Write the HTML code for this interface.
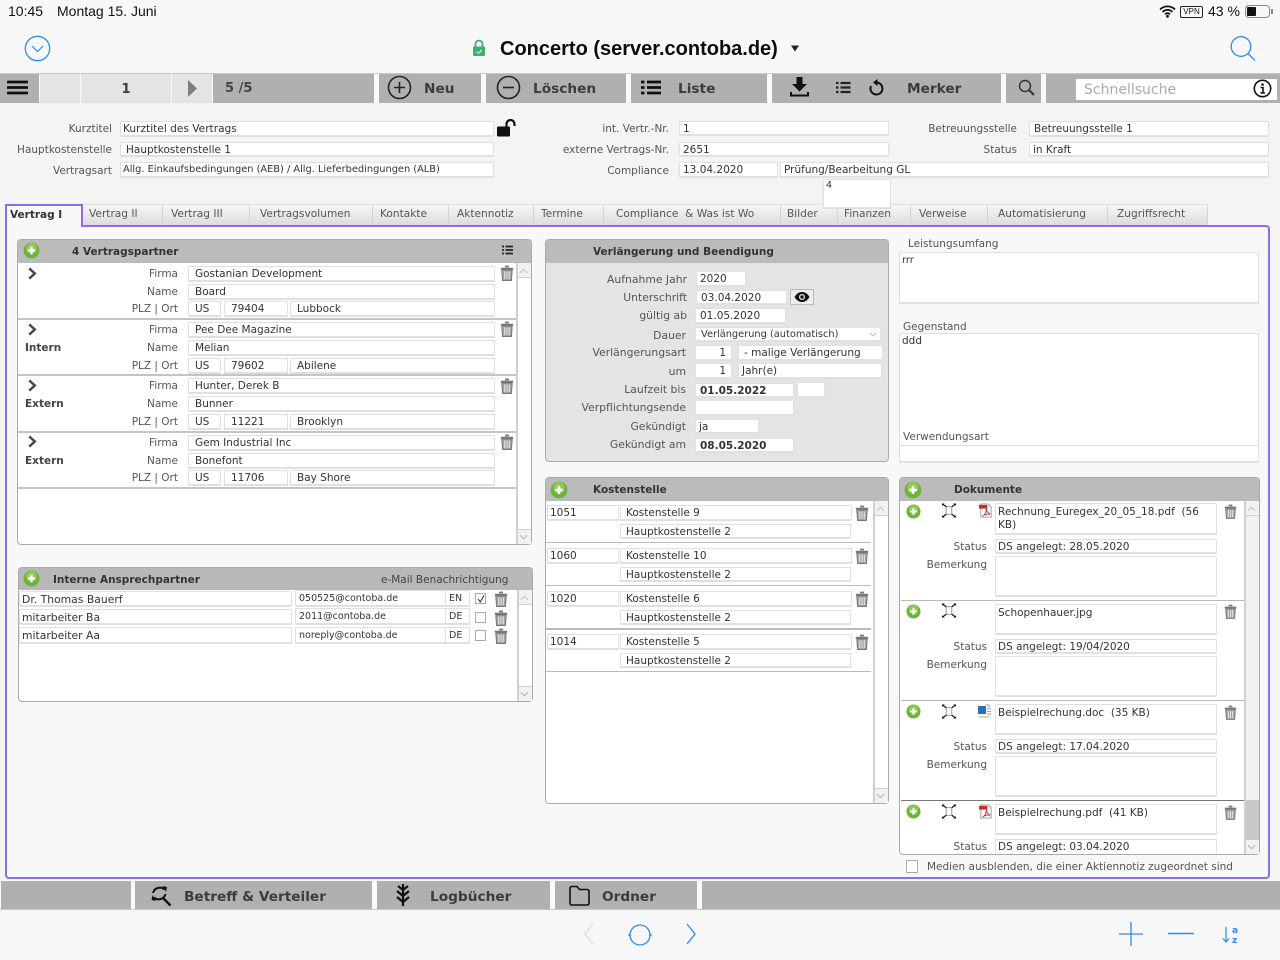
<!DOCTYPE html>
<html lang="de"><head><meta charset="utf-8"><title>Concerto</title>
<style>
html,body{margin:0;padding:0;width:1280px;height:960px;overflow:hidden;background:#f4f4f4}
*{box-sizing:border-box}
body{position:relative;font:11px/1 "DejaVu Sans",sans-serif;color:#333}
div,span.a,svg.a{position:absolute}
.f{background:#fff;border:1px solid #e0e0e0;border-bottom:2px solid #e0e0e0;padding-left:3px;white-space:nowrap;overflow:hidden;color:#333;font-size:10.5px;line-height:15px;border-radius:1px}
.l{text-align:right;color:#555;white-space:nowrap;font-size:10.5px;line-height:16px}
.t{white-space:nowrap;line-height:14px;font-size:10.5px;color:#555}
.b{font-weight:bold;color:#333}
.tb{background:#b0b0b0;top:74px;height:29px}
.tbt{font:bold 13.7px/18px "DejaVu Sans",sans-serif;color:#3c3c3c;white-space:nowrap;top:80px}
.tab{top:204px;height:21px;background:linear-gradient(#f6f6f6,#dcdcdc);border-right:1px solid #d4d4d4;border-top:1px solid #e0e0e0;font-size:10.6px;line-height:19px;color:#555;padding-left:6px;white-space:nowrap}
.p{background:#fff;border:1px solid #aaa;border-radius:4px}
.h{background:#bbb;border-radius:4px 4px 0 0}
.ln{height:2px;background:#c4c4c4}
.sb{background:#fff;border-left:2px solid #d0d0d0}
.sa{background:#f1f1f1;border-bottom:1px solid #d0d0d0}
.bb{background:#b0b0b0;top:881px;height:28px}
.bbt{font:bold 13.7px/18px "DejaVu Sans",sans-serif;color:#3c3c3c;white-space:nowrap;top:888px}
</style></head><body>
<svg width="0" height="0" style="position:absolute"><defs>
<symbol id="tr" viewBox="0 0 14 16"><path d="M5 1.500h4M.8 3.700h12.400" stroke="#777" stroke-width="1.800" fill="none"/><path d="M1.800 5h10.400l-.8 10.500H2.600z" fill="#a4a4a4" stroke="#777"/><path d="M4.700 6.500v7.500M7 6.500v7.500M9.300 6.500v7.500" stroke="#e8e8e8" stroke-width="1"/></symbol>
<symbol id="pl" viewBox="0 0 16 16"><circle cx="8" cy="8" r="7.500" fill="#6db33a"/><circle cx="8" cy="6" r="5" fill="#8fcb55"/><path d="M8 4.500v7M4.500 8h7" stroke="#fff" stroke-width="2.200"/></symbol>
<symbol id="ex" viewBox="0 0 16 16"><path d="M5 4h6v8H5z" fill="none" stroke="#777" stroke-width=".8"/><path d="M1 1l4 3M15 1l-4 3M1 15l4-3M15 15l-4-3" stroke="#111" stroke-width="1.300"/><path d="M.5.500h3l-3 2.500zM15.500.500h-3l3 2.500zM.5 15.500h3l-3-2.500zM15.500 15.500h-3l3-2.500z" fill="#111"/></symbol>
<symbol id="pdf" viewBox="0 0 16 16"><path d="M3 1h8l3 3v11H3z" fill="#fff" stroke="#999"/><path d="M1 2h9v4H1z" fill="#c92c2c"/><path d="M5 14c3-2 4-5 4-8 0 3 2 5 4 6-3-.5-6 0-8 2z" fill="none" stroke="#c92c2c"/></symbol>
<symbol id="ch" viewBox="0 0 10 14"><path d="M2 1.500l6 5.500-6 5.500" fill="none" stroke="#444" stroke-width="2.600"/></symbol>
<symbol id="up" viewBox="0 0 10 6"><path d="M1 5l4-4 4 4" fill="none" stroke="#bbb"/></symbol>
<symbol id="dn" viewBox="0 0 10 6"><path d="M1 1l4 4 4-4" fill="none" stroke="#aaa"/></symbol>
</defs></svg>

<!-- top -->
<div style="left:0;top:0;width:1280px;height:73px;background:#f8f8f8"></div>
<div style="left:8px;top:3px;font:14px/17px 'Liberation Sans',sans-serif;color:#111;white-space:nowrap">10:45</div>
<div style="left:57px;top:3px;font:14px/17px 'Liberation Sans',sans-serif;color:#111;white-space:nowrap">Montag 15. Juni</div>
<svg class="a" style="left:1159px;top:5px" width="17" height="13" viewBox="0 0 17 13"><path d="M1 4.500a10.500 10.500 0 0 1 15 0M3.500 7a7 7 0 0 1 10 0M6 9.300a3.400 3.400 0 0 1 5 0" fill="none" stroke="#111" stroke-width="1.800"/><circle cx="8.500" cy="11.300" r="1.400" fill="#111"/></svg>
<div style="left:1180px;top:6px;width:23px;height:12px;border:1px solid #222;border-radius:2px;font:8px/10px 'Liberation Sans',sans-serif;text-align:center;color:#111">VPN</div>
<div style="left:1208px;top:3px;font:14px/17px 'Liberation Sans',sans-serif;color:#111;white-space:nowrap">43 %</div>
<div style="left:1245px;top:5px;width:25px;height:13px;border:1px solid #888;border-radius:4px"></div>
<div style="left:1247px;top:7px;width:9px;height:9px;background:#111;border-radius:1px"></div>
<div style="left:1271px;top:9px;width:1.500px;height:5px;background:#888"></div>
<svg class="a" style="left:24px;top:35px" width="27" height="27" viewBox="0 0 27 27"><circle cx="13.500" cy="13.500" r="12.200" fill="none" stroke="#2f8bf0" stroke-width="1.300"/><path d="M8 11l5.500 5.500L19 11" fill="none" stroke="#2f8bf0" stroke-width="1.200"/></svg>
<svg class="a" style="left:472px;top:39px" width="14" height="18" viewBox="0 0 14 18"><path d="M3.500 8V5a3.500 3.500 0 0 1 7 0v3" fill="none" stroke="#3fae75" stroke-width="1.800"/><rect x="1" y="7.500" width="12" height="9.500" rx="1" fill="#3fae75"/><path d="M4.500 12.500l2 2 3-3.500" fill="none" stroke="#e8fff0" stroke-width="1"/></svg>
<div style="left:500px;top:37px;font:bold 20px/24px 'Liberation Sans',sans-serif;color:#0c0c0c;white-space:nowrap">Concerto (server.contoba.de)</div>
<svg class="a" style="left:790px;top:45px" width="10" height="7" viewBox="0 0 10 7"><path d="M1 .5h8L5 6.500z" fill="#222"/></svg>
<svg class="a" style="left:1229px;top:35px" width="28" height="27" viewBox="0 0 28 27"><circle cx="12" cy="11.500" r="9.800" fill="none" stroke="#2f8bf0" stroke-width="1.300"/><path d="M19 18.500l7 7" stroke="#2f8bf0" stroke-width="1.300"/></svg>

<!-- toolbar -->
<div style="left:0;top:73px;width:1280px;height:30px;background:#fafafa;border-top:1px solid #c8c8c8"></div>
<div class="tb" style="left:0;width:39px"></div>
<svg class="a" style="left:7px;top:80px" width="21" height="15" viewBox="0 0 21 15"><path d="M1 2h19M1 7.500h19M1 13h19" stroke="#111" stroke-width="2.800" stroke-linecap="round"/></svg>
<div style="left:40px;top:74px;width:40px;height:29px;background:#e4e4e4"></div>
<div style="left:81px;top:74px;width:90px;height:29px;background:#e4e4e4;font:bold 13px/31px 'DejaVu Sans',sans-serif;text-align:center;color:#3c3c3c">1</div>
<div style="left:172px;top:74px;width:40px;height:29px;background:#e4e4e4"></div>
<svg class="a" style="left:187px;top:80px" width="11" height="17" viewBox="0 0 11 17"><path d="M1 0l9 8.500-9 8.500z" fill="#7e7e7e"/></svg>
<div class="tb" style="left:213px;width:161px"></div>
<div class="tbt" style="left:225px;font-size:13px;color:#444">5 /5</div>
<div class="tb" style="left:379px;width:102px"></div>
<svg class="a" style="left:387px;top:75px" width="25" height="25" viewBox="0 0 25 25"><circle cx="12.500" cy="12.500" r="11" fill="none" stroke="#222" stroke-width="1.600"/><path d="M12.500 7v11M7 12.500h11" stroke="#222" stroke-width="1.600"/></svg>
<div class="tbt" style="left:424px">Neu</div>
<div class="tb" style="left:486px;width:140px"></div>
<svg class="a" style="left:496px;top:75px" width="25" height="25" viewBox="0 0 25 25"><circle cx="12.500" cy="12.500" r="11" fill="none" stroke="#222" stroke-width="1.600"/><path d="M7 12.500h11" stroke="#222" stroke-width="1.600"/></svg>
<div class="tbt" style="left:533px">Löschen</div>
<div class="tb" style="left:631px;width:136px"></div>
<svg class="a" style="left:641px;top:80px" width="20" height="15" viewBox="0 0 20 15"><path d="M0 2h3.500M0 7.500h3.500M0 13h3.500M6 2h14M6 7.500h14M6 13h14" stroke="#111" stroke-width="2.800"/></svg>
<div class="tbt" style="left:678px">Liste</div>
<div class="tb" style="left:772px;width:229px"></div>
<svg class="a" style="left:790px;top:77px" width="19" height="20" viewBox="0 0 19 20"><path d="M6.500 0h6v7h4.500l-7.500 7.500L2 7h4.500z" fill="#111"/><path d="M1 15v3.500h17V15" fill="none" stroke="#111" stroke-width="2"/></svg>
<svg class="a" style="left:836px;top:81px" width="15" height="13" viewBox="0 0 15 13"><path d="M0 2h2.500M0 6.500h2.500M0 11h2.500M4.500 2h10M4.500 6.500h10M4.500 11h10" stroke="#222" stroke-width="2.200"/></svg>
<svg class="a" style="left:868px;top:79px" width="17" height="17" viewBox="0 0 17 17"><path d="M8.500 3.500a6 6 0 1 1-5.500 3.500" fill="none" stroke="#111" stroke-width="2"/><path d="M9.500 0v7L5 3.500z" fill="#111"/></svg>
<div class="tbt" style="left:907px">Merker</div>
<div class="tb" style="left:1006px;width:35px"></div>
<svg class="a" style="left:1018px;top:79px" width="17" height="17" viewBox="0 0 17 17"><circle cx="7" cy="7" r="5.500" fill="none" stroke="#333" stroke-width="1.500"/><path d="M11 11l5 5" stroke="#333" stroke-width="2"/></svg>
<div class="tb" style="left:1046px;width:234px"></div>
<div style="left:1076px;top:79px;width:201px;height:21px;background:#fff;font:14px/23px 'DejaVu Sans',sans-serif;color:#aaa;padding-left:8px">Schnellsuche</div>
<svg class="a" style="left:1253px;top:79px" width="19" height="19" viewBox="0 0 19 19"><circle cx="9.500" cy="9.500" r="8.200" fill="none" stroke="#111" stroke-width="1.600"/><circle cx="9.500" cy="5.500" r="1.300" fill="#111"/><path d="M7.500 8.500h2.500v5M7.500 14h4.500" fill="none" stroke="#111" stroke-width="1.600"/></svg>

<!-- head form -->
<div class="l" style="left:0;top:121px;width:112px">Kurztitel</div>
<div class="f" style="left:120px;top:121px;width:374px;height:16px;padding-left:2px;font-size:10.600px">Kurztitel des Vertrags</div>
<svg class="a" style="left:496px;top:119px" width="21" height="18" viewBox="0 0 21 18"><rect x="1" y="7.500" width="13" height="10" rx="1" fill="#111"/><path d="M10.500 8V5a4 4 0 0 1 8 0v2" fill="none" stroke="#111" stroke-width="2.200"/></svg>
<div class="l" style="left:0;top:142px;width:112px">Hauptkostenstelle</div>
<div class="f" style="left:120px;top:142px;width:374px;height:15px;padding-left:5px">Hauptkostenstelle 1</div>
<div class="l" style="left:0;top:163px;width:112px">Vertragsart</div>
<div class="f" style="left:120px;top:162px;width:374px;height:16px;font-size:9.800px;line-height:14px;padding-left:2px">Allg. Einkaufsbedingungen (AEB) / Allg. Lieferbedingungen (ALB)</div>
<div class="l" style="left:500px;top:121px;width:169px">int. Vertr.-Nr.</div>
<div class="f" style="left:679px;top:121px;width:210px;height:15px">1</div>
<div class="l" style="left:500px;top:142px;width:169px">externe Vertrags-Nr.</div>
<div class="f" style="left:679px;top:142px;width:210px;height:15px">2651</div>
<div class="l" style="left:500px;top:163px;width:169px">Compliance</div>
<div class="f" style="left:679px;top:162px;width:99px;height:16px">13.04.2020</div>
<div class="f" style="left:780px;top:162px;width:489px;height:16px">Prüfung/Bearbeitung GL</div>
<div class="l" style="left:880px;top:121px;width:137px">Betreuungsstelle</div>
<div class="f" style="left:1029px;top:121px;width:240px;height:16px;padding-left:4px">Betreuungsstelle 1</div>
<div class="l" style="left:880px;top:142px;width:137px">Status</div>
<div class="f" style="left:1029px;top:142px;width:240px;height:15px">in Kraft</div>

<!-- main frame -->
<div style="left:5px;top:225px;width:1265px;height:654px;background:#f8f8f8;border:2px solid #8b6fe2;border-radius:0 4px 4px 4px"></div>

<!-- tabs -->
<div style="left:5px;top:204px;width:78px;height:23px;background:#f8f8f8;border:2px solid #8b6fe2;border-bottom:none;font:bold 10.500px/18px 'DejaVu Sans',sans-serif;color:#333;padding-left:3px">Vertrag I</div>
<div class="tab" style="left:83px;width:80px">Vertrag II</div>
<div class="tab" style="left:163px;width:87px;padding-left:8px">Vertrag III</div>
<div class="tab" style="left:250px;width:123px;padding-left:10px">Vertragsvolumen</div>
<div class="tab" style="left:373px;width:76px;padding-left:7px">Kontakte</div>
<div class="tab" style="left:449px;width:85px;padding-left:8px">Aktennotiz</div>
<div class="tab" style="left:534px;width:70px;padding-left:7px">Termine</div>
<div class="tab" style="left:604px;width:177px;padding-left:12px">Compliance&nbsp; &amp; Was ist Wo</div>
<div class="tab" style="left:781px;width:57px;padding-left:6px">Bilder</div>
<div class="tab" style="left:838px;width:73px;padding-left:6px">Finanzen</div>
<div class="tab" style="left:911px;width:77px;padding-left:8px">Verweise</div>
<div class="tab" style="left:988px;width:120px;padding-left:10px">Automatisierung</div>
<div class="tab" style="left:1108px;width:100px;padding-left:9px">Zugriffsrecht</div>
<div class="f" style="left:823px;top:179px;width:68px;height:30px;font-size:9.500px;z-index:3;padding-left:2px;line-height:12px">4</div>

<!-- Vertragspartner -->
<div class="p" style="left:17px;top:239px;width:515px;height:306px"></div>
<div class="h" style="left:18px;top:240px;width:513px;height:23px;border-radius:3px 3px 0 0"></div>
<svg class="a" style="left:23px;top:242px" width="17" height="17"><use href="#pl" width="17" height="17"/></svg>
<div class="t b" style="left:72px;top:245px">4 Vertragspartner</div>
<svg class="a" style="left:502px;top:245px" width="11" height="10" viewBox="0 0 11 10"><path d="M0 1.500h2M0 5h2M0 8.500h2M3.500 1.500H11M3.500 5H11M3.500 8.500H11" stroke="#222" stroke-width="1.800"/></svg>
<div class="sb" style="left:516px;top:263px;width:15px;height:281px"></div>
<div class="sa" style="left:518px;top:263px;width:13px;height:15px"></div>
<svg class="a" style="left:519px;top:268px" width="9" height="6"><use href="#up" width="9" height="6"/></svg>
<div class="sa" style="left:518px;top:529px;width:13px;height:15px;border-top:1px solid #d0d0d0;border-bottom:none"></div>
<svg class="a" style="left:519px;top:534px" width="9" height="6"><use href="#dn" width="9" height="6"/></svg>

<!-- row 1 -->
<svg class="a" style="left:27px;top:267px" width="10" height="13"><use href="#ch" width="10" height="13"/></svg>
<div class="l" style="left:60px;top:266px;width:118px">Firma</div><div class="f" style="left:188px;top:266px;width:307px;height:16px;padding-left:6px">Gostanian Development</div>
<div class="l" style="left:60px;top:284px;width:118px">Name</div><div class="f" style="left:188px;top:284px;width:307px;height:16px;padding-left:6px">Board</div>
<div class="l" style="left:60px;top:301px;width:118px">PLZ | Ort</div><div class="f" style="left:188px;top:301px;width:33px;height:16px;padding-left:6px">US</div><div class="f" style="left:224px;top:301px;width:64px;height:16px;padding-left:6px">79404</div><div class="f" style="left:290px;top:301px;width:205px;height:16px;padding-left:6px">Lubbock</div>
<svg class="a" style="left:500px;top:265px" width="14" height="16"><use href="#tr" width="14" height="16"/></svg>
<div class="ln" style="left:18px;top:318px;width:498px"></div>
<!-- row 2 -->
<svg class="a" style="left:27px;top:323px" width="10" height="13"><use href="#ch" width="10" height="13"/></svg>
<div class="t b" style="left:25px;top:341px;color:#444">Intern</div>
<div class="l" style="left:60px;top:322px;width:118px">Firma</div><div class="f" style="left:188px;top:322px;width:307px;height:16px;padding-left:6px">Pee Dee Magazine</div>
<div class="l" style="left:60px;top:340px;width:118px">Name</div><div class="f" style="left:188px;top:340px;width:307px;height:16px;padding-left:6px">Melian</div>
<div class="l" style="left:60px;top:358px;width:118px">PLZ | Ort</div><div class="f" style="left:188px;top:358px;width:33px;height:16px;padding-left:6px">US</div><div class="f" style="left:224px;top:358px;width:64px;height:16px;padding-left:6px">79602</div><div class="f" style="left:290px;top:358px;width:205px;height:16px;padding-left:6px">Abilene</div>
<svg class="a" style="left:500px;top:321px" width="14" height="16"><use href="#tr" width="14" height="16"/></svg>
<div class="ln" style="left:18px;top:374px;width:498px"></div>
<!-- row 3 -->
<svg class="a" style="left:27px;top:379px" width="10" height="13"><use href="#ch" width="10" height="13"/></svg>
<div class="t b" style="left:25px;top:397px;color:#444">Extern</div>
<div class="l" style="left:60px;top:378px;width:118px">Firma</div><div class="f" style="left:188px;top:378px;width:307px;height:16px;padding-left:6px">Hunter, Derek B</div>
<div class="l" style="left:60px;top:396px;width:118px">Name</div><div class="f" style="left:188px;top:396px;width:307px;height:16px;padding-left:6px">Bunner</div>
<div class="l" style="left:60px;top:414px;width:118px">PLZ | Ort</div><div class="f" style="left:188px;top:414px;width:33px;height:16px;padding-left:6px">US</div><div class="f" style="left:224px;top:414px;width:64px;height:16px;padding-left:6px">11221</div><div class="f" style="left:290px;top:414px;width:205px;height:16px;padding-left:6px">Brooklyn</div>
<svg class="a" style="left:500px;top:378px" width="14" height="16"><use href="#tr" width="14" height="16"/></svg>
<div class="ln" style="left:18px;top:431px;width:498px"></div>
<!-- row 4 -->
<svg class="a" style="left:27px;top:435px" width="10" height="13"><use href="#ch" width="10" height="13"/></svg>
<div class="t b" style="left:25px;top:454px;color:#444">Extern</div>
<div class="l" style="left:60px;top:435px;width:118px">Firma</div><div class="f" style="left:188px;top:435px;width:307px;height:16px;padding-left:6px">Gem Industrial Inc</div>
<div class="l" style="left:60px;top:453px;width:118px">Name</div><div class="f" style="left:188px;top:453px;width:307px;height:16px;padding-left:6px">Bonefont</div>
<div class="l" style="left:60px;top:470px;width:118px">PLZ | Ort</div><div class="f" style="left:188px;top:470px;width:33px;height:16px;padding-left:6px">US</div><div class="f" style="left:224px;top:470px;width:64px;height:16px;padding-left:6px">11706</div><div class="f" style="left:290px;top:470px;width:205px;height:16px;padding-left:6px">Bay Shore</div>
<svg class="a" style="left:500px;top:434px" width="14" height="16"><use href="#tr" width="14" height="16"/></svg>
<div class="ln" style="left:18px;top:487px;width:498px"></div>

<!-- Interne -->
<div class="p" style="left:18px;top:567px;width:515px;height:135px"></div>
<div class="h" style="left:19px;top:568px;width:513px;height:22px;background:#b8b8b8;border-radius:3px 3px 0 0"></div>
<svg class="a" style="left:23px;top:570px" width="17" height="17"><use href="#pl" width="17" height="17"/></svg>
<div class="t b" style="left:53px;top:573px">Interne Ansprechpartner</div>
<div class="t" style="left:381px;top:573px;color:#444">e-Mail Benachrichtigung</div>
<div class="sb" style="left:517px;top:590px;width:15px;height:111px"></div>
<div class="sa" style="left:519px;top:590px;width:13px;height:15px"></div>
<svg class="a" style="left:520px;top:595px" width="9" height="6"><use href="#up" width="9" height="6"/></svg>
<div class="sa" style="left:519px;top:686px;width:13px;height:15px;border-top:1px solid #d0d0d0;border-bottom:none"></div>
<svg class="a" style="left:520px;top:691px" width="9" height="6"><use href="#dn" width="9" height="6"/></svg>
<div class="f" style="left:19px;top:591px;width:273px;height:16px;padding-left:2px;font-size:10.800px">Dr. Thomas Bauerf</div><div class="f" style="left:295px;top:590px;width:151px;height:17px;font-size:9.500px">050525@contoba.de</div><div class="f" style="left:445px;top:590px;width:25px;height:17px;font-size:9.500px">EN</div>
<div style="left:475px;top:593px;width:11px;height:11px;border:1px solid #aaa;background:#fff"></div>
<svg class="a" style="left:476px;top:594px" width="10" height="10" viewBox="0 0 10 10"><path d="M2 5l2.200 3L8 1.500" fill="none" stroke="#222" stroke-width="1"/></svg>
<svg class="a" style="left:494px;top:591px" width="14" height="16"><use href="#tr" width="14" height="16"/></svg>
<div class="f" style="left:19px;top:609px;width:273px;height:16px;padding-left:2px;font-size:10.800px">mitarbeiter Ba</div><div class="f" style="left:295px;top:608px;width:151px;height:17px;font-size:9.500px">2011@contoba.de</div><div class="f" style="left:445px;top:608px;width:25px;height:17px;font-size:9.500px">DE</div>
<div style="left:475px;top:612px;width:11px;height:11px;border:1px solid #aaa;background:#fff"></div>
<svg class="a" style="left:494px;top:610px" width="14" height="16"><use href="#tr" width="14" height="16"/></svg>
<div class="f" style="left:19px;top:627px;width:273px;height:17px;padding-left:2px;font-size:10.800px">mitarbeiter Aa</div><div class="f" style="left:295px;top:627px;width:151px;height:17px;font-size:9.500px">noreply@contoba.de</div><div class="f" style="left:445px;top:627px;width:25px;height:17px;font-size:9.500px">DE</div>
<div style="left:475px;top:630px;width:11px;height:11px;border:1px solid #aaa;background:#fff"></div>
<svg class="a" style="left:494px;top:628px" width="14" height="16"><use href="#tr" width="14" height="16"/></svg>

<!-- Verlaengerung -->
<div class="p" style="left:545px;top:239px;width:344px;height:223px;background:#e4e4e4"></div>
<div class="h" style="left:546px;top:240px;width:342px;height:23px;border-radius:3px 3px 0 0"></div>
<div class="t b" style="left:593px;top:245px">Verlängerung und Beendigung</div>
<div class="l" style="left:560px;top:272px;width:127px;font-size:10.800px">Aufnahme Jahr</div><div class="f" style="left:696px;top:271px;width:50px;height:16px">2020</div>
<div class="l" style="left:560px;top:290px;width:127px;font-size:10.800px">Unterschrift</div><div class="f" style="left:696px;top:290px;width:91px;height:15px;padding-left:4px">03.04.2020</div>
<div style="left:790px;top:289px;width:24px;height:16px;background:#ececec;border:1px solid #bbb"></div>
<svg class="a" style="left:794px;top:291px" width="16" height="12" viewBox="0 0 16 12"><path d="M.5 6C3 2 5.500 1 8 1s5 1 7.500 5C13 10 10.500 11 8 11S3 10 .5 6z" fill="#111"/><circle cx="8" cy="6" r="3" fill="#e8e8e8"/><circle cx="8" cy="6" r="1.700" fill="#111"/></svg>
<div class="l" style="left:560px;top:308px;width:127px;font-size:10.800px">gültig ab</div><div class="f" style="left:695px;top:308px;width:91px;height:16px;padding-left:4px">01.05.2020</div>
<div class="l" style="left:560px;top:328px;width:126px;font-size:10.800px">Dauer</div><div class="f" style="left:695px;top:327px;width:186px;height:15px;padding-left:5px;font-size:9.800px;line-height:14px">Verlängerung (automatisch)</div>
<svg class="a" style="left:869px;top:332px" width="8" height="5"><use href="#dn" width="8" height="5"/></svg>
<div class="l" style="left:560px;top:345px;width:126px;font-size:10.800px">Verlängerungsart</div><div class="f" style="left:695px;top:345px;width:37px;height:16px;text-align:right;padding-right:5px">1</div><div class="f" style="left:738px;top:345px;width:145px;height:16px;padding-left:5px">- malige Verlängerung</div>
<div class="l" style="left:560px;top:364px;width:126px;font-size:10.800px">um</div><div class="f" style="left:695px;top:363px;width:37px;height:16px;text-align:right;padding-right:5px">1</div><div class="f" style="left:738px;top:363px;width:144px;height:16px">Jahr(e)</div>
<div class="l" style="left:560px;top:382px;width:126px;font-size:10.800px">Laufzeit bis</div><div class="f" style="left:695px;top:383px;width:99px;height:15px;padding-left:4px;font-weight:bold">01.05.2022</div><div class="f" style="left:797px;top:382px;width:28px;height:16px"></div>
<div class="l" style="left:560px;top:400px;width:126px;font-size:10.800px">Verpflichtungsende</div><div class="f" style="left:695px;top:400px;width:99px;height:16px"></div>
<div class="l" style="left:560px;top:419px;width:126px;font-size:10.800px">Gekündigt</div><div class="f" style="left:695px;top:419px;width:64px;height:15px">ja</div>
<div class="l" style="left:560px;top:437px;width:126px;font-size:10.800px">Gekündigt am</div><div class="f" style="left:695px;top:438px;width:99px;height:15px;padding-left:4px;font-weight:bold">08.05.2020</div>

<!-- Leistungsumfang -->
<div class="t" style="left:908px;top:237px">Leistungsumfang</div>
<div class="f" style="left:899px;top:252px;width:360px;height:52px;font-size:9.800px;padding-left:2px">rrr</div>
<div class="t" style="left:903px;top:320px">Gegenstand</div>
<div class="f" style="left:899px;top:333px;width:360px;height:130px;font-size:10.500px;padding-left:2px">ddd</div>
<div class="t" style="left:903px;top:430px">Verwendungsart</div>
<div style="left:900px;top:445px;width:358px;height:1px;background:#ddd"></div>

<!-- Kostenstelle -->
<div class="p" style="left:545px;top:477px;width:344px;height:327px"></div>
<div class="h" style="left:546px;top:478px;width:342px;height:23px;border-radius:3px 3px 0 0"></div>
<svg class="a" style="left:550px;top:481px" width="18" height="18"><use href="#pl" width="18" height="18"/></svg>
<div class="t b" style="left:593px;top:483px">Kostenstelle</div>
<div class="sb" style="left:873px;top:501px;width:15px;height:302px"></div>
<div class="sa" style="left:875px;top:501px;width:13px;height:15px"></div>
<svg class="a" style="left:876px;top:506px" width="9" height="6"><use href="#up" width="9" height="6"/></svg>
<div class="sa" style="left:875px;top:788px;width:13px;height:15px;border-top:1px solid #d0d0d0;border-bottom:none"></div>
<svg class="a" style="left:876px;top:793px" width="9" height="6"><use href="#dn" width="9" height="6"/></svg>

<div class="f" style="left:547px;top:505px;width:72px;height:16px;padding-left:2px">1051</div><div class="f" style="left:620px;top:505px;width:232px;height:16px;padding-left:5px">Kostenstelle 9</div><div class="f" style="left:620px;top:524px;width:231px;height:15px;padding-left:5px">Hauptkostenstelle 2</div>
<svg class="a" style="left:855px;top:505px" width="14" height="16"><use href="#tr" width="14" height="16"/></svg>
<div class="ln" style="left:546px;top:542px;width:325px;height:1px;background:#bbb"></div>
<div class="f" style="left:547px;top:548px;width:72px;height:16px;padding-left:2px">1060</div><div class="f" style="left:620px;top:548px;width:232px;height:16px;padding-left:5px">Kostenstelle 10</div><div class="f" style="left:620px;top:567px;width:231px;height:15px;padding-left:5px">Hauptkostenstelle 2</div>
<svg class="a" style="left:855px;top:548px" width="14" height="16"><use href="#tr" width="14" height="16"/></svg>
<div class="ln" style="left:546px;top:585px;width:325px;height:1px;background:#bbb"></div>
<div class="f" style="left:547px;top:591px;width:72px;height:16px;padding-left:2px">1020</div><div class="f" style="left:620px;top:591px;width:232px;height:16px;padding-left:5px">Kostenstelle 6</div><div class="f" style="left:620px;top:610px;width:231px;height:15px;padding-left:5px">Hauptkostenstelle 2</div>
<svg class="a" style="left:855px;top:591px" width="14" height="16"><use href="#tr" width="14" height="16"/></svg>
<div class="ln" style="left:546px;top:628px;width:325px;height:2px;background:#bbb"></div>
<div class="f" style="left:547px;top:634px;width:72px;height:16px;padding-left:2px">1014</div><div class="f" style="left:620px;top:634px;width:232px;height:16px;padding-left:5px">Kostenstelle 5</div><div class="f" style="left:620px;top:653px;width:231px;height:15px;padding-left:5px">Hauptkostenstelle 2</div>
<svg class="a" style="left:855px;top:634px" width="14" height="16"><use href="#tr" width="14" height="16"/></svg>
<div class="ln" style="left:546px;top:671px;width:325px;height:1px;background:#bbb"></div>

<!-- Dokumente -->
<div class="p" style="left:899px;top:477px;width:361px;height:378px"></div>
<div class="h" style="left:900px;top:478px;width:359px;height:23px;border-radius:3px 3px 0 0"></div>
<svg class="a" style="left:904px;top:481px" width="18" height="18"><use href="#pl" width="18" height="18"/></svg>
<div class="t b" style="left:954px;top:483px">Dokumente</div>
<div class="sb" style="left:1244px;top:501px;width:15px;height:353px;background:#f1f1f1"></div>
<div class="sa" style="left:1246px;top:501px;width:13px;height:15px"></div>
<svg class="a" style="left:1247px;top:506px" width="9" height="6"><use href="#up" width="9" height="6"/></svg>
<div style="left:1246px;top:800px;width:13px;height:40px;background:#c8c8c8"></div>
<div class="sa" style="left:1246px;top:840px;width:13px;height:14px;border-bottom:none"></div>
<svg class="a" style="left:1247px;top:844px" width="9" height="6"><use href="#dn" width="9" height="6"/></svg>

<svg class="a" style="left:906px;top:504px" width="15" height="15"><use href="#pl" width="15" height="15"/></svg>
<svg class="a" style="left:941px;top:503px" width="16" height="15"><use href="#ex" width="16" height="15"/></svg>
<svg class="a" style="left:978px;top:503px" width="15" height="15"><use href="#pdf" width="15" height="15"/></svg>
<div class="f" style="left:995px;top:503px;width:222px;height:32px;white-space:normal;padding-left:2px;line-height:13px;padding-top:2px">Rechnung_Euregex_20_05_18.pdf&nbsp; (56 KB)</div>
<svg class="a" style="left:1224px;top:504px" width="13" height="15"><use href="#tr" width="13" height="15"/></svg>
<div class="l" style="left:920px;top:539px;width:67px">Status</div><div class="f" style="left:995px;top:539px;width:222px;height:15px;padding-left:2px">DS angelegt: 28.05.2020</div>
<div class="l" style="left:910px;top:557px;width:77px">Bemerkung</div><div class="f" style="left:995px;top:556px;width:222px;height:41px"></div>
<div class="ln" style="left:901px;top:600px;width:343px;height:1px;background:#bbb"></div>

<svg class="a" style="left:906px;top:604px" width="15" height="15"><use href="#pl" width="15" height="15"/></svg>
<svg class="a" style="left:941px;top:603px" width="16" height="15"><use href="#ex" width="16" height="15"/></svg>
<div class="f" style="left:995px;top:604px;width:222px;height:31px;padding-left:2px;padding-top:1px">Schopenhauer.jpg</div>
<svg class="a" style="left:1224px;top:604px" width="13" height="15"><use href="#tr" width="13" height="15"/></svg>
<div class="l" style="left:920px;top:639px;width:67px">Status</div><div class="f" style="left:995px;top:639px;width:222px;height:15px;padding-left:2px">DS angelegt: 19/04/2020</div>
<div class="l" style="left:910px;top:657px;width:77px">Bemerkung</div><div class="f" style="left:995px;top:656px;width:222px;height:41px"></div>
<div class="ln" style="left:901px;top:700px;width:343px;height:1px;background:#bbb"></div>

<svg class="a" style="left:906px;top:704px" width="15" height="15"><use href="#pl" width="15" height="15"/></svg>
<svg class="a" style="left:941px;top:704px" width="16" height="15"><use href="#ex" width="16" height="15"/></svg>
<svg class="a" style="left:978px;top:704px" width="14" height="15" viewBox="0 0 14 15"><path d="M8 1h3v3" fill="none" stroke="#999"/><rect x="0" y="2" width="8" height="8" fill="#2f6fb0"/><path d="M9 5h4M9 7.500h4M9 10h4" stroke="#7aa7d6"/><path d="M1 13h10" stroke="#aaa"/></svg>
<div class="f" style="left:995px;top:704px;width:222px;height:31px;padding-left:2px;padding-top:1px">Beispielrechung.doc&nbsp; (35 KB)</div>
<svg class="a" style="left:1224px;top:705px" width="13" height="15"><use href="#tr" width="13" height="15"/></svg>
<div class="l" style="left:920px;top:739px;width:67px">Status</div><div class="f" style="left:995px;top:739px;width:222px;height:15px;padding-left:2px">DS angelegt: 17.04.2020</div>
<div class="l" style="left:910px;top:757px;width:77px">Bemerkung</div><div class="f" style="left:995px;top:756px;width:222px;height:41px"></div>
<div class="ln" style="left:901px;top:800px;width:343px;height:1px;background:#777"></div>

<svg class="a" style="left:906px;top:804px" width="15" height="15"><use href="#pl" width="15" height="15"/></svg>
<svg class="a" style="left:941px;top:804px" width="16" height="15"><use href="#ex" width="16" height="15"/></svg>
<svg class="a" style="left:978px;top:804px" width="15" height="15"><use href="#pdf" width="15" height="15"/></svg>
<div class="f" style="left:995px;top:804px;width:222px;height:31px;padding-left:2px;padding-top:1px">Beispielrechung.pdf&nbsp; (41 KB)</div>
<svg class="a" style="left:1224px;top:805px" width="13" height="15"><use href="#tr" width="13" height="15"/></svg>
<div class="l" style="left:920px;top:839px;width:67px">Status</div><div class="f" style="left:995px;top:839px;width:222px;height:15px;padding-left:2px;border-bottom:none">DS angelegt: 03.04.2020</div>

<div style="left:906px;top:860px;width:12px;height:13px;border:1px solid #aaa;background:#fff"></div>
<div class="t" style="left:927px;top:860px">Medien ausblenden, die einer Aktiennotiz zugeordnet sind</div>

<!-- bottom bar -->
<div style="left:0;top:880px;width:1280px;height:30px;background:#fafafa;border-bottom:1px solid #c8c8c8"></div>
<div class="bb" style="left:1px;width:130px"></div>
<div class="bb" style="left:135px;width:237px"></div>
<svg class="a" style="left:150px;top:885px" width="22" height="22" viewBox="0 0 22 22"><path d="M3 8a7 7 0 0 1 11.500-3.500" fill="none" stroke="#111" stroke-width="2"/><path d="M12.500 1l4.500 1-1 5z" fill="#111"/><path d="M15.500 9a7 7 0 0 1-11.500 3.500" fill="none" stroke="#111" stroke-width="2"/><path d="M6 16l-4.500-1 1-5z" fill="#111"/><path d="M13.500 13.500l7 7" stroke="#111" stroke-width="2.400"/></svg>
<div class="bbt" style="left:184px">Betreff &amp; Verteiler</div>
<div class="bb" style="left:377px;width:173px"></div>
<svg class="a" style="left:394px;top:882px" width="18" height="26" viewBox="0 0 18 26"><path d="M9 2v22M9 20l-6-5M9 20l6-5M9 14l-6-5M9 14l6-5M9 8L4 4M9 8l5-4" stroke="#111" stroke-width="2.200" fill="none"/></svg>
<div class="bbt" style="left:430px">Logbücher</div>
<div class="bb" style="left:555px;width:142px"></div>
<svg class="a" style="left:568px;top:884px" width="23" height="23" viewBox="0 0 23 23"><path d="M2 4.500q0-2 2-2h5l2.500 3H19q2 0 2 2V19q0 2-2 2H4q-2 0-2-2z" fill="none" stroke="#111" stroke-width="1.600"/></svg>
<div class="bbt" style="left:602px">Ordner</div>
<div class="bb" style="left:702px;width:578px"></div>

<!-- bottom nav -->
<div style="left:0;top:910px;width:1280px;height:50px;background:#f7f7f7"></div>
<svg class="a" style="left:583px;top:922px" width="12" height="24" viewBox="0 0 12 24"><path d="M10 2L2 12l8 10" fill="none" stroke="#dcdcdc" stroke-width="1.300"/></svg>
<svg class="a" style="left:626px;top:923px" width="28" height="24" viewBox="0 0 28 24"><circle cx="14" cy="12" r="10" fill="none" stroke="#2f8bf0" stroke-width="1.300"/><path d="M2 12h3M23 12h3" stroke="#2f8bf0" stroke-width="1.300"/></svg>
<svg class="a" style="left:685px;top:922px" width="12" height="24" viewBox="0 0 12 24"><path d="M2 2l8 10-8 10" fill="none" stroke="#2f8bf0" stroke-width="1.300"/></svg>
<svg class="a" style="left:1118px;top:921px" width="26" height="26" viewBox="0 0 26 26"><path d="M13 1v24M1 13h24" stroke="#2f8bf0" stroke-width="1.300"/></svg>
<svg class="a" style="left:1168px;top:932px" width="26" height="3" viewBox="0 0 26 3"><path d="M0 1.500h26" stroke="#2f8bf0" stroke-width="1.400"/></svg>
<svg class="a" style="left:1222px;top:925px" width="20" height="19" viewBox="0 0 20 19"><path d="M4 2v15M1 13.500L4 17l3-3.500" fill="none" stroke="#2f8bf0" stroke-width="1.200"/><text x="10" y="8" font-family="'DejaVu Sans',sans-serif" font-size="9" font-weight="bold" fill="#2f8bf0">a</text><text x="10" y="18" font-family="'DejaVu Sans',sans-serif" font-size="9" font-weight="bold" fill="#2f8bf0">z</text></svg>
</body></html>
